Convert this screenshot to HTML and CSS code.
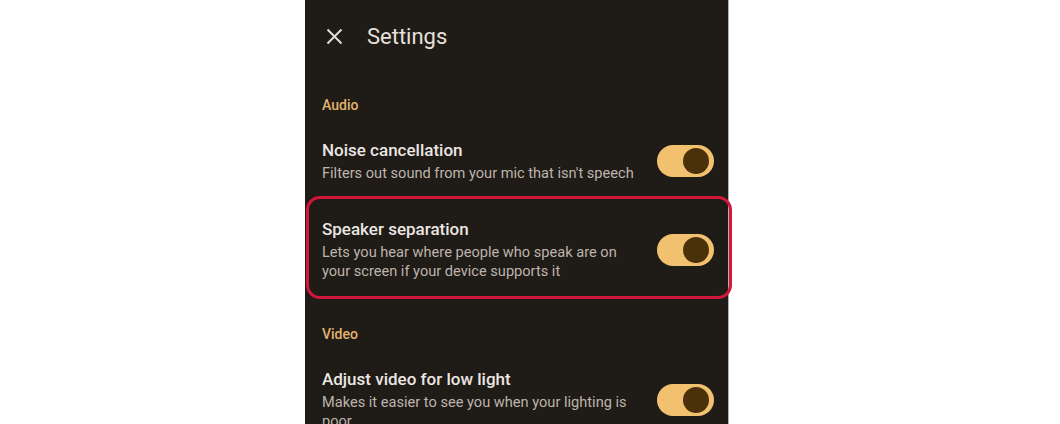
FILE: index.html
```html
<!DOCTYPE html>
<html lang="en">
<head>
    <meta charset="UTF-8">
    <meta name="viewport" content="width=device-width, initial-scale=1.0">
    <title>Settings</title>
    <link rel="stylesheet" href="styles.css">
</head>
<body>
    <div class="page">
        <div class="settings">
            <div class="settings-header">
                <svg class="close-icon" width="17" height="17" viewBox="0 0 17 17">
                    <path d="M1.5 1.5 L15.5 15.5 M15.5 1.5 L1.5 15.5" stroke="#e2ddd8" stroke-width="2" fill="none"/>
                </svg>
                <span class="settings-title">Settings</span>
            </div>

            <div class="section-label">Audio</div>

            <div class="setting-row">
                <div class="setting-text">
                    <div class="setting-name">Noise cancellation</div>
                    <div class="setting-desc">Filters out sound from your mic that isn't speech</div>
                </div>
                <div class="toggle on"><div class="knob"></div></div>
            </div>

            <div class="setting-row highlighted">
                <div class="setting-text">
                    <div class="setting-name">Speaker separation</div>
                    <div class="setting-desc">Lets you hear where people who speak are on<br>your screen if your device supports it</div>
                </div>
                <div class="toggle on"><div class="knob"></div></div>
            </div>

            <div class="section-label video">Video</div>

            <div class="setting-row">
                <div class="setting-text">
                    <div class="setting-name">Adjust video for low light</div>
                    <div class="setting-desc">Makes it easier to see you when your lighting is<br>poor</div>
                </div>
                <div class="toggle on"><div class="knob"></div></div>
            </div>
        </div>
    </div>
</body>
</html>
```

FILE: styles.css
```css
body {
    margin: 0;
    padding: 0;
    background: #ffffff;
    font-family: Roboto, "Noto Sans", Arial, sans-serif;
    overflow: hidden;
}
.page {
    height: 424px;
    padding-left: 305px;
}
.settings {
    width: 423px;
    height: 424px;
    background: #1f1b17;
    border-right: 1px solid #b4b2b0;
}
.settings-header {
    display: flex;
    align-items: center;
    height: 72px;
    padding-left: 21px;
}
.close-icon {
    margin-right: 24px;
}
.settings-title {
    color: #e6e1dc;
    font-size: 22px;
    margin-top: 1px;
}
.section-label {
    color: #e2b46c;
    font-size: 14px;
    font-weight: 500;
    line-height: 18px;
    padding-left: 17px;
    margin-top: 24px;
}
.section-label.video {
    margin-top: 26px;
}
.setting-row {
    display: flex;
    align-items: center;
    justify-content: space-between;
    padding: 0 14px 0 17px;
    margin-top: 25px;
}
.setting-row.highlighted {
    margin: 13px -4px 0 1px;
    padding: 19px 15px 15px 13px;
    border: 3px solid #d3173c;
    border-radius: 14px;
}
.setting-name {
    color: #ebe6e1;
    font-size: 17px;
    font-weight: 500;
    line-height: 22px;
}
.setting-desc {
    color: #bdb4ab;
    font-size: 14.6px;
    line-height: 19px;
    margin-top: 3px;
}
.toggle {
    flex-shrink: 0;
    width: 57px;
    height: 32px;
    border-radius: 16px;
    background: #f2c170;
    display: flex;
    align-items: center;
    justify-content: flex-end;
    padding-right: 5px;
    box-sizing: border-box;
}
.knob {
    width: 26px;
    height: 26px;
    border-radius: 50%;
    background: #4b3109;
}
```
